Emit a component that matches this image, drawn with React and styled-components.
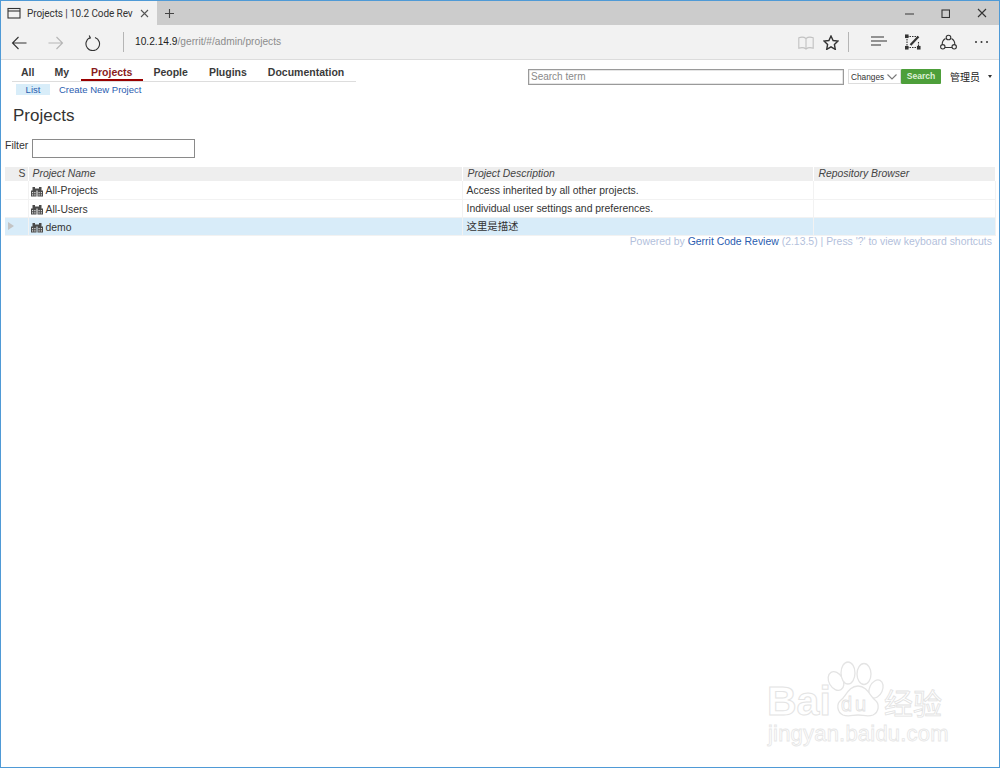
import React from "react";
import styled, { createGlobalStyle } from "styled-components";

const Global = createGlobalStyle`
  html, body { margin: 0; padding: 0; background: #fff; }
  * { box-sizing: border-box; }
  body { font-family: "Liberation Sans", Arial, "Noto Sans CJK SC", sans-serif; }
`;

const Win = styled.div`
  position: relative; width: 1000px; height: 768px; border: 1px solid #4f9ad6; overflow: hidden;
  background: #fff; display: flex; flex-direction: column;
`;
const TabBar = styled.div`height: 24px; background: #cccccc; display: flex; align-items: center; flex: none;`;
const Tab = styled.div`
  width: 156px; height: 24px; background: #f2f2f2; display: flex; align-items: center; padding-left: 6px;
  font-size: 10px; color: #333; flex: none; font-family: Roboto, "Liberation Sans", sans-serif;
`;
const TabTitle = styled.span`margin-left: 6px; width: 106px; white-space: nowrap; letter-spacing: -0.1px;`;
const TabClose = styled.span`margin-left: 7px; display: flex;`;
const NewTab = styled.span`margin-left: 7px; display: flex;`;
const WinControls = styled.div`margin-left: auto; display: flex; width: 147px; padding-left: 53px; gap: 27px; align-items: center;`;
const Toolbar = styled.div`
  height: 35px; background: #f2f2f2; border-bottom: 1px solid #dcdcdc; display: flex; align-items: center; flex: none; padding-bottom: 1px;
`;
const ToolIcon = styled.span`display: flex; flex: none; margin-left: ${p => p.$ml}px; margin-top: ${p => p.$mt || 0}px;`;
const Sep = styled.span`width: 1px; height: 20px; background: #b5b5b5; margin-left: ${p => p.$ml}px; flex: none;`;
const Url = styled.div`margin-left: 11px; font-size: 10.2px; color: #8c8c8c; width: 655px; white-space: nowrap;`;
const Host = styled.span`color: #222;`;

const Header = styled.div`display: flex; justify-content: space-between; height: 38px; flex: none;`;
const NavCol = styled.div`margin-left: 11px; width: 344px;`;
const TopMenu = styled.div`display: flex; height: 22px; border-bottom: 1px solid #ddd;`;
const TopItem = styled.div`
  height: 21px; padding: 6px ${p => p.$on ? 11 : 10}px 0 10px; font-size: 10.5px; font-weight: bold; color: ${p => p.$on ? "#8a1c1c" : "#3a3a3a"};
  border-bottom: ${p => p.$on ? "2px solid #990000" : "none"}; white-space: nowrap; margin-left: ${p => p.$ml || 0}px;
`;
const SubMenu = styled.div`display: flex; margin-left: 4px; margin-top: 1px; font-size: 9.5px; align-items: center; height: 12px;`;
const SubOn = styled.span`background: #d8edf9; color: #2a5db0; width: 34px; height: 11px; line-height: 11px; text-align: center;`;
const SubLink = styled.span`color: #2a5db0; margin-left: 9px;`;
const SearchBox = styled.div`display: flex; align-items: center; height: 17px; margin-top: 8px; margin-right: 7px;`;
const SearchInput = styled.div`
  width: 316px; height: 16px; border: 1px solid #9a9a9a; font-size: 10px; color: #8a8a8a; padding-left: 2px; line-height: 14px;
  background: #fff; box-shadow: inset 0 0 0 0.5px #ccc;
`;
const Select = styled.div`
  margin-left: 4px; width: 53px; height: 15px; border: 1px solid #ddd; display: flex; align-items: center; justify-content: space-between;
  font-size: 8.3px; color: #333; padding: 0 3px 0 2px; background: #fff;
`;
const SearchBtn = styled.div`
  width: 40px; height: 15px; background: #4d9f3a; color: #dff0d8; font-size: 8.6px; font-weight: bold; text-align: center; line-height: 15px; border-radius: 1px;
`;
const User = styled.div`margin-left: 9px; font-size: 10px; color: #222; width: 30px;`;
const Caret = styled.span`
  margin-left: 8px; width: 0; height: 0; border-left: 2px solid transparent; border-right: 2px solid transparent; border-top: 3px solid #333;
`;

const Main = styled.div`padding: 0 4px;`;
const Title = styled.h1`margin: 9px 0 0 8px; font-size: 17px; font-weight: normal; color: #333; line-height: 18px;`;
const FilterRow = styled.div`display: flex; margin-top: 14px; height: 19px;`;
const FilterLabel = styled.span`font-size: 10.5px; color: #333;`;
const FilterInput = styled.div`margin-left: 4px; width: 163px; height: 19px; border: 1px solid #8a8a8a; background: #fff;`;

const Table = styled.table`
  margin-top: 9px; width: 990px; border-collapse: collapse; table-layout: fixed; font-size: 10.4px; color: #333;
`;
const Th = styled.th`
  height: 14px; padding: 0 0 0 ${p => p.$pl ?? 4}px; background: #eeeeee; font-weight: normal; font-style: ${p => p.$plain ? "normal" : "italic"};
  text-align: ${p => p.$plain ? "right" : "left"}; border-right: 1px solid #fff; color: #444; padding-right: ${p => p.$plain ? "2px" : "0"};
  line-height: 12px; vertical-align: middle;
`;
const Tr = styled.tr`background: ${p => p.$sel ? "#d8ecf9" : "#fff"}; height: 18px; border-bottom: 1px solid #f2f2f2;`;
const Td = styled.td`
  padding: 2px 0 0 ${p => p.$pl ?? 3}px; border-right: 1px solid #f2f2f2; vertical-align: middle; white-space: nowrap; line-height: 14px;
`;
const NameCell = styled.span`display: flex; align-items: center; height: 14px; padding-top: ${p => p.$pt}px;`;
const Name = styled.span`margin-left: 3px;`;
const Arrow = styled.span`
  display: block; margin: -3px 0 0 0; width: 0; height: 0; border-left: 6px solid #c4c4c4; border-top: 4.5px solid transparent; border-bottom: 4.5px solid transparent;
`;
const Footer = styled.div`
  width: 990px; text-align: right; font-size: 10.45px; color: #b3bfdc; padding-right: 3px; margin-top: -1px; line-height: 13px;
`;
const FootLink = styled.span`color: #2a5db0;`;

const Watermark = styled.div`position: absolute; left: 766px; top: 659px; width: 190px; height: 90px; color: #fff;`;
const Bai = styled.span`
  position: absolute; left: 0; top: 21px; font-size: 41px; font-weight: bold; -webkit-text-stroke: 1px #e4e4e4; line-height: 40px;
`;
const Jing = styled.span`
  position: absolute; left: 1px; top: 62px; font-size: 22px; -webkit-text-stroke: 0.8px #e6e6e6; line-height: 24px; white-space: nowrap; letter-spacing: 0.2px;
`;
const Cn = styled.span`
  position: absolute; left: 117px; top: 26px; font-size: 29px; -webkit-text-stroke: 0.8px #e2e2e2; line-height: 32px; white-space: nowrap;
  font-family: "Noto Sans CJK SC", sans-serif;
`;
const Du = styled.span`
  position: absolute; left: 74px; top: 34px; font-size: 20px; -webkit-text-stroke: 0.8px #e2e2e2; line-height: 20px; letter-spacing: 3px;
`;
const Paw = styled.svg`position: absolute; left: 50px; top: 0; overflow: visible;`;

const Stroke = { fill: "none", stroke: "currentColor", strokeWidth: 1.1 };
const I = ({ w = 16, h = 16, c = "#333", children }) => (
  <svg width={w} height={h} viewBox={`0 0 ${w} ${h}`} style={{ color: c, display: "block" }} {...Stroke}>{children}</svg>
);

const Building = () => (
  <svg width="12" height="11" viewBox="0 0 12 11" style={{ display: "block", flex: "none", marginLeft: -1 }}>
    <path fill="#4a4a4a" d="M0 4.500h5.500v6H0zM6.500 4.500H12v6H6.500zM1.500 1h2.500v3.500H1.500zM8 1h2.500v3.500H8zM4 2.500h4v2H4z" />
    <path fill="#ddd" d="M1 6h1.200v1.200H1zM3.300 6h1.200v1.200H3.300zM1 8.300h1.200v1.200H1zM3.300 8.300h1.200v1.200H3.300zM7.500 6h1.200v1.200H7.500zM9.800 6H11v1.200H9.800zM7.500 8.300h1.200v1.200H7.500zM9.800 8.300H11v1.200H9.800z" />
  </svg>
);

export default function App() {
  return (
    <Win>
      <Global />
      <TabBar>
        <Tab>
          <I w={14} h={12}><rect x="1" y="1.500" width="12" height="9.500" /><path d="M1 4h12" /></I>
          <TabTitle>Projects | 10.2 Code Rev</TabTitle>
          <TabClose><I w={9} h={9} c="#555"><path d="M1 1l7 7M8 1l-7 7" /></I></TabClose>
        </Tab>
        <NewTab><I w={11} h={11} c="#444"><path d="M5.500 1v9M1 5.500h9" /></I></NewTab>
        <WinControls>
          <I w={9} h={9} c="#444"><path d="M0 5h9" /></I>
          <I w={9} h={9} c="#333"><rect x="1" y="1" width="7.500" height="7.500" /></I>
          <I w={10} h={10} c="#333"><path d="M1 1l8 8M9 1l-8 8" /></I>
        </WinControls>
      </TabBar>
      <Toolbar>
        <ToolIcon $ml={10} $mt={2}><I w={16} h={14}><path d="M15.500 7H1.500M7.500 1l-6 6 6 6" /></I></ToolIcon>
        <ToolIcon $ml={21} $mt={2}><I w={16} h={14} c="#b5b5b5"><path d="M.5 7h14M8.500 1l6 6-6 6" /></I></ToolIcon>
        <ToolIcon $ml={21} $mt={2}><I w={16} h={16} c="#333"><path d="M5 2.600A6.800 6.800 0 1 0 10 2.400M4.200 .5L5.400 3 2.800 4" /></I></ToolIcon>
        <Sep $ml={22} />
        <Url><Host>10.2.14.9</Host>/gerrit/#/admin/projects</Url>
        <ToolIcon $ml={8} $mt={2}><I w={16} h={14} c="#c2c2c2"><path d="M8 2.500C6 1 3 1 .8 1.800v10.500C3 11.500 6 11.500 8 13c2-1.500 5-1.500 7.200-.7V1.800C13 1 10 1 8 2.500zM8 2.500V13" /></I></ToolIcon>
        <ToolIcon $ml={9} $mt={2}><I w={16} h={15}><path d="M8 1l2.100 4.500 4.900.6-3.600 3.400.9 4.900L8 11.900l-4.300 2.500.9-4.900L1 6.100l4.900-.6z" strokeWidth="1.400" /></I></ToolIcon>
        <Sep $ml={9} />
        <ToolIcon $ml={22}><I w={16} h={11}><path d="M0 1h13M0 5h16M0 9h10" strokeWidth="1.200" /></I></ToolIcon>
        <ToolIcon $ml={18}><I w={16} h={16}><path d="M2 2.500h11M2 2.500v11M2 13.500h11.500M13.500 8v5.500" strokeDasharray="1.500 1" /><path d="M5.500 11l8-8.500" strokeWidth="2.200" /><rect x="0.500" y="1" width="2.500" height="2.500" fill="#333" /><rect x="0.500" y="12.500" width="2.500" height="2.500" fill="#333" /><rect x="12.500" y="12.500" width="2.500" height="2.500" fill="#333" /></I></ToolIcon>
        <ToolIcon $ml={19}><I w={17} h={16}><path d="M5.500 4.500C3 6 2 8.500 2.300 11M11.500 4.500C14 6 15 8.500 14.700 11M4.500 13.500h8" /><circle cx="8.500" cy="3.500" r="2.300" fill="#f2f2f2" /><circle cx="2.800" cy="12.800" r="2.200" fill="#f2f2f2" /><circle cx="14.200" cy="12.800" r="2.200" fill="#f2f2f2" /></I></ToolIcon>
        <ToolIcon $ml={17}><I w={15} h={4}><circle cx="2" cy="2" r="1" fill="#333" stroke="none" /><circle cx="7.500" cy="2" r="1" fill="#333" stroke="none" /><circle cx="13" cy="2" r="1" fill="#333" stroke="none" /></I></ToolIcon>
      </Toolbar>
      <Header>
        <NavCol>
          <TopMenu>
            <TopItem $ml={-1}>All</TopItem>
            <TopItem>My</TopItem>
            <TopItem $on $ml={2}>Projects</TopItem>
            <TopItem>People</TopItem>
            <TopItem $ml={1}>Plugins</TopItem>
            <TopItem $ml={1}>Documentation</TopItem>
          </TopMenu>
          <SubMenu><SubOn>List</SubOn><SubLink>Create New Project</SubLink></SubMenu>
        </NavCol>
        <SearchBox>
          <SearchInput>Search term</SearchInput>
          <Select>Changes <I w={10} h={6} c="#777"><path d="M.5 .5L5 5l4.500-4.500" /></I></Select>
          <SearchBtn>Search</SearchBtn>
          <User>管理员</User>
          <Caret />
        </SearchBox>
      </Header>
      <Main>
        <Title>Projects</Title>
        <FilterRow><FilterLabel>Filter</FilterLabel><FilterInput /></FilterRow>
        <Table>
          <colgroup><col width="23" /><col width="434" /><col width="351" /><col width="182" /></colgroup>
          <thead>
            <tr><Th $plain $pl={0}>S</Th><Th>Project Name</Th><Th $pl={5}>Project Description</Th><Th $pl={5}>Repository Browser</Th></tr>
          </thead>
          <tbody>
            <Tr>
              <Td />
              <Td><NameCell $pt={1}><Building /><Name>All-Projects</Name></NameCell></Td>
              <Td $pl={4}>Access inherited by all other projects.</Td><Td />
            </Tr>
            <Tr>
              <Td />
              <Td><NameCell $pt={1}><Building /><Name>All-Users</Name></NameCell></Td>
              <Td $pl={4}>Individual user settings and preferences.</Td><Td />
            </Tr>
            <Tr $sel>
              <Td><Arrow /></Td>
              <Td><NameCell $pt={1}><Building /><Name>demo</Name></NameCell></Td>
              <Td $pl={4}>这里是描述</Td><Td />
            </Tr>
          </tbody>
        </Table>
        <Footer>Powered by <FootLink>Gerrit Code Review</FootLink> (2.13.5) | Press '?' to view keyboard shortcuts</Footer>
      </Main>
      <Watermark>
        <Paw width="76" height="60" viewBox="0 0 76 60" fill="#fff" stroke="#e4e4e4" strokeWidth="1.300">
          <ellipse cx="19" cy="21" rx="7" ry="10" transform="rotate(-30 19 21)" />
          <ellipse cx="31" cy="13" rx="7" ry="11" />
          <ellipse cx="47" cy="14" rx="7" ry="10.500" />
          <ellipse cx="59" cy="29" rx="6.500" ry="9.500" transform="rotate(25 59 29)" />
          <path d="M26 55c-6-3-7-11-2-15 5-4 8-14 17-14s12 10 17 14c5 4 4 12-2 15-5 2-10 0-15 0s-10 2-15 0z" />
        </Paw>
        <Bai>Bai</Bai>
        <Du>du</Du>
        <Cn>经验</Cn>
        <Jing>jingyan.baidu.com</Jing>
      </Watermark>
    </Win>
  );
}
